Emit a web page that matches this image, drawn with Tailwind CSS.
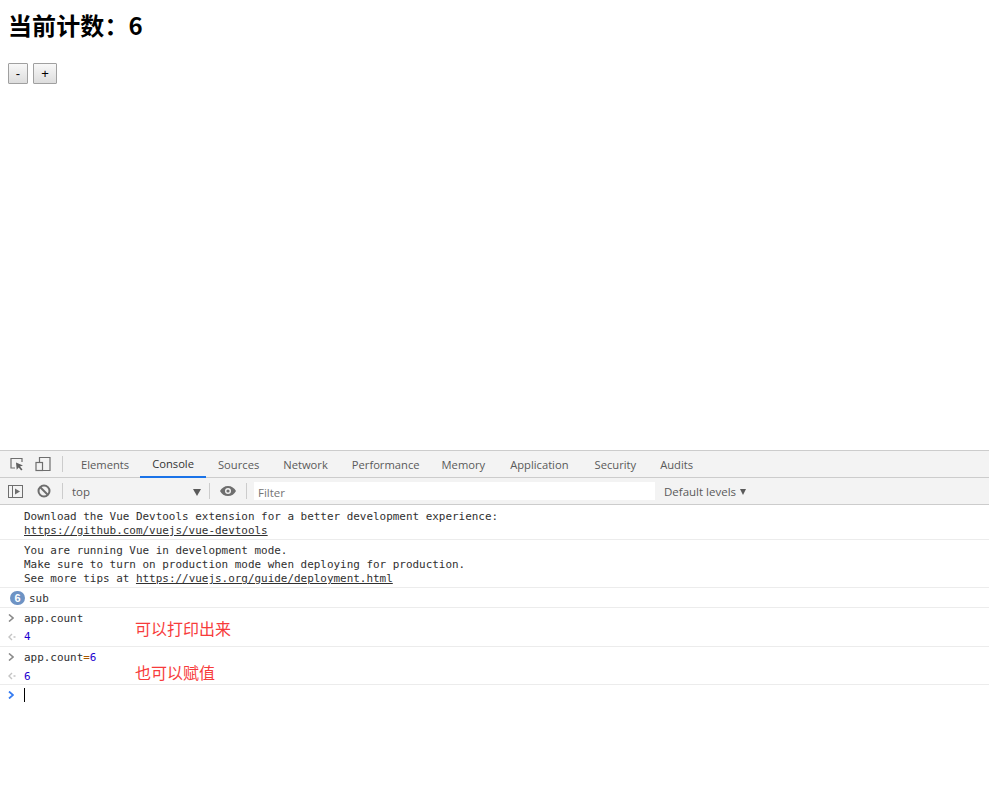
<!DOCTYPE html>
<html lang="en">
<head>
  <meta charset="UTF-8">
  <meta name="viewport" content="width=device-width, initial-scale=1.0">
  <script src="https://cdn.jsdelivr.net/npm/@tailwindcss/browser@4"></script>
  <title>Counter</title>
</head>
<body class="bg-white h-[801px] w-[989px] overflow-hidden font-['Open_Sans','Noto_Sans_CJK_SC',sans-serif]">
  <!-- Page -->
  <div class="h-[450px] pl-2 pt-[9px]">
    <h1 class="h-[31px] text-[24px] leading-[31px] font-bold text-black tracking-[0.1px] font-['Noto_Sans_CJK_SC',sans-serif]">当前计数：6</h1>
    <div class="flex gap-[5px] mt-[23px]">
      <button class="w-5 h-[21px] text-[13px] leading-[17px] text-black border border-[#a0a0a0] rounded-[1px] bg-gradient-to-b from-[#f8f8f8] to-[#dddddd] font-['Liberation_Sans',sans-serif]">-</button>
      <button class="w-6 h-[21px] text-[13px] leading-[17px] text-black border border-[#a0a0a0] rounded-[1px] bg-gradient-to-b from-[#f8f8f8] to-[#dddddd] font-['Liberation_Sans',sans-serif]">+</button>
    </div>
  </div>

  <!-- Devtools tabs -->
  <div class="h-[28px] bg-[#f3f3f3] border-t border-b border-[#cccccc] flex items-center text-[11.2px] text-[#5a5a5a]">
    <svg class="ml-[9px] w-4 h-4" viewBox="0 0 16 16" fill="none">
      <path d="M6 12H2V2.500h11V6" stroke="#6e6e6e" stroke-width="1.2"/>
      <path d="M7 6.500l7 3-3 1 2.500 3-1.300 1-2.500-3-2 2.200z" fill="#5f5f5f"/>
    </svg>
    <svg class="ml-[10px] w-4 h-4" viewBox="0 0 16 16" fill="none" stroke="#6e6e6e" stroke-width="1.2">
      <path d="M4.500 6V1.500h10.500v13H8"/>
      <rect x="1" y="6.500" width="6.500" height="8"/>
    </svg>
    <div class="ml-[11px] w-px h-4 bg-[#cccccc]"></div>
    <div class="flex h-full ml-[6px]">
      <div class="pl-3 pr-[11px] pt-[2px] flex items-center">Elements</div>
      <div class="px-3 flex items-center text-[#333333] border-b-2 border-[#1a73e8] h-[27px] pt-[2px]">Console</div>
      <div class="px-3 pt-[2px] flex items-center">Sources</div>
      <div class="px-3 pt-[2px] flex items-center">Network</div>
      <div class="pl-3 pr-[10px] pt-[2px] flex items-center">Performance</div>
      <div class="pl-3 pr-[13px] pt-[2px] flex items-center">Memory</div>
      <div class="pl-3 pr-[14px] pt-[2px] flex items-center">Application</div>
      <div class="px-3 pt-[2px] flex items-center">Security</div>
      <div class="px-3 pt-[2px] flex items-center">Audits</div>
    </div>
  </div>

  <!-- Console toolbar -->
  <div class="h-[27px] bg-[#f3f3f3] border-b border-[#cccccc] flex items-center text-[11.5px] text-[#5a5a5a]">
    <svg class="ml-2 w-[15px] h-[13px]" viewBox="0 0 15 13" fill="none">
      <rect x="0.500" y="0.500" width="14" height="12" stroke="#6e6e6e"/>
      <path d="M4.500 0.500v12" stroke="#6e6e6e"/>
      <path d="M7 3.500l5 3-5 3z" fill="#6e6e6e"/>
    </svg>
    <svg class="ml-[14px] w-[14px] h-[14px]" viewBox="0 0 14 14" fill="none" stroke="#6e6e6e" stroke-width="2">
      <circle cx="7" cy="7" r="5.500"/>
      <path d="M3 3l8 8"/>
    </svg>
    <div class="ml-[11px] w-px h-4 bg-[#cccccc]"></div>
    <div class="ml-[9px] w-[129px] flex items-center justify-between pt-[2px]">
      <span>top</span>
      <span class="w-0 h-0 border-l-[4px] border-r-[4px] border-t-[7px] border-l-transparent border-r-transparent border-t-[#5a5a5a]"></span>
    </div>
    <div class="ml-[8px] w-px h-4 bg-[#cccccc]"></div>
    <svg class="ml-[10px] w-4 h-[10px]" viewBox="0 0 16 10">
      <path d="M8 0C4.500 0 1.500 2 0 5c1.500 3 4.500 5 8 5s6.500-2 8-5c-1.500-3-4.500-5-8-5zm0 8a3 3 0 1 1 0-6 3 3 0 0 1 0 6z" fill="#6e6e6e"/>
      <circle cx="8" cy="5" r="1.600" fill="#6e6e6e"/>
    </svg>
    <div class="ml-[10px] w-px h-4 bg-[#cccccc]"></div>
    <div class="ml-[7px] w-[401px] h-[18px] bg-white pl-[4px] leading-[21px] text-[#757575]">Filter</div>
    <div class="ml-[9px] flex items-center gap-[4px] pt-[2px]">
      <span>Default levels</span>
      <span class="w-0 h-0 border-l-[3.500px] border-r-[3.500px] border-t-[6px] border-l-transparent border-r-transparent border-t-[#5a5a5a]"></span>
    </div>
  </div>

  <!-- Console messages -->
  <div class="relative text-[10.95px] leading-[14px] text-[#303030] font-['DejaVu_Sans_Mono',monospace]">
    <div class="h-[35px] border-b border-[#ececec] pl-6 pt-[5px]">
      <div>Download the Vue Devtools extension for a better development experience:</div>
      <div><span class="underline">https://github.com/vuejs/vue-devtools</span></div>
    </div>
    <div class="h-[48px] border-b border-[#ececec] pl-6 pt-[4px]">
      <div>You are running Vue in development mode.</div>
      <div>Make sure to turn on production mode when deploying for production.</div>
      <div>See more tips at <span class="underline">https://vuejs.org/guide/deployment.html</span></div>
    </div>
    <div class="h-[20px] border-b border-[#ececec] flex items-center">
      <span class="ml-[10px] w-[15px] h-[14px] rounded-full bg-[#6e93c4] text-white text-[11px] leading-[14px] font-bold text-center font-['Liberation_Sans',sans-serif]">6</span>
      <span class="ml-[4px] pt-[2px]">sub</span>
    </div>
    <div class="h-[39px] border-b border-[#ececec]">
      <div class="h-[19px] flex items-center">
        <svg class="ml-[8px] w-[6px] h-[8px]" viewBox="0 0 6 8" fill="none" stroke="#8a8a8a" stroke-width="1.600"><path d="M1 0.500l4 3.500-4 3.500"/></svg>
        <span class="ml-[10px] pt-[2px]">app.count</span>
      </div>
      <div class="h-[19px] flex items-center">
        <svg class="ml-[8px] w-[8px] h-[8px]" viewBox="0 0 8 8" fill="none" stroke="#c4c4c4" stroke-width="1.400"><path d="M4 1L1 4l3 3M5.500 4h2"/></svg>
        <span class="ml-[8px] text-[#1c00cf]">4</span>
      </div>
    </div>
    <div class="h-[38px] border-b border-[#ececec]">
      <div class="h-[19px] flex items-center">
        <svg class="ml-[8px] w-[6px] h-[8px]" viewBox="0 0 6 8" fill="none" stroke="#8a8a8a" stroke-width="1.600"><path d="M1 0.500l4 3.500-4 3.500"/></svg>
        <span class="ml-[10px] pt-[2px]">app.count<span class="text-[#a85a00]">=</span><span class="text-[#1c00cf]">6</span></span>
      </div>
      <div class="h-[19px] flex items-center">
        <svg class="ml-[8px] w-[8px] h-[8px]" viewBox="0 0 8 8" fill="none" stroke="#c4c4c4" stroke-width="1.400"><path d="M4 1L1 4l3 3M5.500 4h2"/></svg>
        <span class="ml-[8px] pt-[2px] text-[#1c00cf]">6</span>
      </div>
    </div>
    <div class="h-[20px] flex items-center">
      <svg class="ml-[8px] w-[6px] h-[8px]" viewBox="0 0 6 8" fill="none" stroke="#367cf1" stroke-width="1.800"><path d="M1 0.500l4 3.500-4 3.500"/></svg>
      <span class="ml-[10px] w-px h-[14px] bg-black"></span>
    </div>

    <!-- Red notes drawn on the screenshot -->
    <div class="absolute left-[135px] top-[112px] text-[16px] leading-[22px] text-[#f73b3b] font-['Noto_Sans_CJK_SC',sans-serif]">可以打印出来</div>
    <div class="absolute left-[135px] top-[156px] text-[16px] leading-[22px] text-[#f73b3b] font-['Noto_Sans_CJK_SC',sans-serif]">也可以赋值</div>
  </div>
</body>
</html>
